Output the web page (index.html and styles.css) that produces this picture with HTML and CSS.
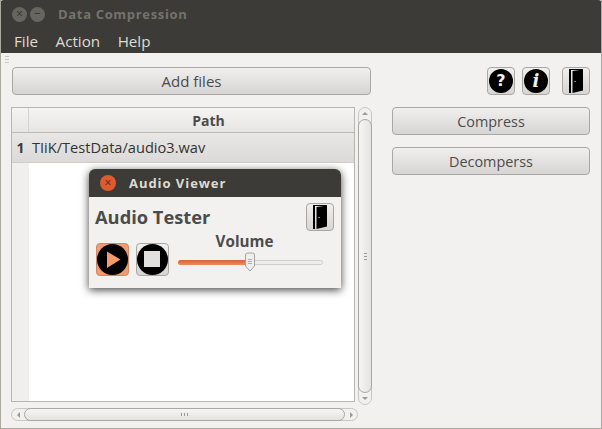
FILE: index.html
```html
<!DOCTYPE html>
<html lang="en">
<head>
    <meta charset="UTF-8">
    <title>Data Compression</title>
    <link rel="stylesheet" href="styles.css">
</head>
<body>
    <div class="window">
        <div class="titlebar">
            <span class="wm-btn">&times;</span>
            <span class="wm-btn">&minus;</span>
            <span class="title">Data Compression</span>
        </div>
        <div class="menubar">
            <span>File</span>
            <span>Action</span>
            <span>Help</span>
        </div>

        <div class="content">
            <div class="grip"></div>
            <!-- Left column: add button and file table -->
            <div class="left">
                <button class="btn add-btn">Add files</button>
                <div class="table-row">
                    <div class="table">
                        <div class="thead">
                            <div class="corner"></div>
                            <div class="th">Path</div>
                        </div>
                        <div class="tr">
                            <div class="row-num">1</div>
                            <div class="td">TIiK/TestData/audio3.wav</div>
                        </div>
                        <div class="tbody-rest">
                            <div class="row-gutter"></div>
                        </div>
                    </div>
                    <div class="vscroll">
                        <div class="arrow-box"><span class="arrow-up"></span></div>
                        <div class="vthumb"><span class="vgrip"></span></div>
                        <div class="arrow-box"><span class="arrow-down"></span></div>
                    </div>
                </div>
                <div class="hscroll">
                    <div class="harrow"><span class="arrow-left"></span></div>
                    <div class="hthumb"><span class="hgrip"></span></div>
                    <div class="harrow"><span class="arrow-right"></span></div>
                </div>
            </div>

            <!-- Right column: icon tools and actions -->
            <div class="right">
                <div class="tools">
                    <button class="btn icon-btn"><span class="disc">?</span></button>
                    <button class="btn icon-btn"><span class="disc disc-info">i</span></button>
                    <button class="btn icon-btn door-btn">
                        <svg width="20" height="26" viewBox="0 0 20 26">
                            <path d="M3 1h14v1H5v23H3z" fill="#000"/>
                            <path d="M6.500 3L17 1.500V22.500L6.500 25z" fill="#000"/>
                            <rect x="8.500" y="13" width="1" height="1" fill="#fff"/>
                        </svg>
                    </button>
                </div>
                <button class="btn action-btn">Compress</button>
                <button class="btn action-btn">Decomperss</button>
            </div>
        </div>

        <!-- Floating audio viewer dialog -->
        <div class="dialog">
            <div class="dialog-bar">
                <span class="dialog-close">&times;</span>
                <span class="dialog-title">Audio Viewer</span>
            </div>
            <div class="dialog-body">
                <div class="dialog-top">
                    <span class="dialog-heading">Audio Tester</span>
                    <button class="btn icon-btn door-btn">
                        <svg width="20" height="26" viewBox="0 0 20 26">
                            <path d="M3 1h14v1H5v23H3z" fill="#000"/>
                            <path d="M6.500 3L17 1.500V22.500L6.500 25z" fill="#000"/>
                            <rect x="8.500" y="13" width="1" height="1" fill="#fff"/>
                        </svg>
                    </button>
                </div>
                <div class="dialog-controls">
                    <button class="btn media-btn media-on">
                        <svg width="31" height="31" viewBox="0 0 31 31">
                            <circle cx="15.500" cy="15.500" r="15.500" fill="#000"/>
                            <path d="M10 7.500L23.500 15.500L10 24z" fill="#f49a6c"/>
                        </svg>
                    </button>
                    <button class="btn media-btn">
                        <svg width="31" height="31" viewBox="0 0 31 31">
                            <circle cx="15.500" cy="15.500" r="15.500" fill="#000"/>
                            <rect x="7" y="7" width="16" height="16" fill="#e2e1e0"/>
                        </svg>
                    </button>
                    <div class="volume">
                        <div class="volume-label">Volume</div>
                        <div class="slider">
                            <div class="slider-fill"></div>
                            <svg class="slider-thumb" width="12" height="20" viewBox="0 0 12 20">
                                <path d="M1.500 3a2 2 0 0 1 2-2h5a2 2 0 0 1 2 2v11l-4.500 5l-4.500-5z" fill="#f0efee" stroke="#a5a39e"/>
                                <path d="M4 7.500h4M4 9.500h4M4 11.500h4" stroke="#b0aeaa"/>
                            </svg>
                        </div>
                    </div>
                </div>
            </div>
        </div>
    </div>
</body>
</html>
```

FILE: styles.css
```css
* {
    box-sizing: border-box;
}
body {
    margin: 0;
    font-family: "Open Sans", sans-serif;
    font-size: 14.6px;
    color: #3c3c3c;
    background-color: #f2f1f0;
}
.window {
    position: relative;
    width: 602px;
    height: 429px;
    overflow: hidden;
    display: flex;
    flex-direction: column;
    border-left: 1px solid #aaa89f;
    border-right: 1px solid #aaa89f;
    border-bottom: 1px solid #aaa89f;
}
.titlebar {
    height: 27px;
    margin: 0 -1px;
    display: flex;
    align-items: center;
    padding: 2px 0 0 12px;
    border-radius: 4px 4px 0 0;
    background-color: #3c3b37;
}
.wm-btn {
    width: 15px;
    height: 15px;
    margin-right: 3px;
    border-radius: 50%;
    background-color: #66655f;
    color: #33322e;
    font-size: 12px;
    line-height: 14px;
    text-align: center;
}
.title {
    margin: -2px 0 0 10px;
    font-weight: 700;
    font-size: 13px;
    letter-spacing: 0.67px;
    color: #75736b;
}
.menubar {
    height: 26px;
    margin: 0 -1px;
    display: flex;
    gap: 17.500px;
    padding: 0 0 0 14px;
    background-color: #3c3b37;
    color: #dfdbd2;
    font-size: 15.2px;
    line-height: 28px;
}
.content {
    position: relative;
    flex: 1;
    display: flex;
    padding: 14px 11px 0 10px;
}
.grip {
    position: absolute;
    left: 4px;
    top: 3px;
    width: 4px;
    height: 8px;
    background: repeating-linear-gradient(#c9c7c3 0 1px, transparent 1px 3px);
}
.btn {
    padding: 0;
    border: 1px solid #a9a7a2;
    border-radius: 4px;
    background: linear-gradient(#f0efee, #d6d5d3);
    color: #4c4c4c;
    font-family: "Open Sans", sans-serif;
    font-size: 14.4px;
}
.left {
    width: 361px;
    display: flex;
    flex-direction: column;
}
.add-btn {
    height: 28px;
    margin-left: 1px;
    width: 359px;
    font-size: 15px;
}
.table-row {
    display: flex;
    gap: 3px;
    margin-top: 12px;
}
.table {
    width: 344px;
    height: 295px;
    display: flex;
    flex-direction: column;
    border: 1px solid #b8b6b1;
    background-color: #fff;
}
.thead {
    height: 25px;
    display: flex;
    background: linear-gradient(#f5f4f3, #e6e5e3);
    border-bottom: 1px solid #bdbbb6;
}
.corner {
    width: 17px;
    border-right: 1px solid #d5d3cf;
}
.th {
    flex: 1;
    padding-left: 34px;
    text-align: center;
    font-size: 14px;
    font-weight: 700;
    line-height: 25px;
    color: #4c4c4c;
}
.tr {
    height: 30px;
    display: flex;
    background: linear-gradient(#e8e7e5, #dbdad8);
    border-bottom: 1px solid #d0cecb;
}
.row-num {
    width: 17px;
    text-align: center;
    font-size: 14px;
    font-weight: 700;
    line-height: 30px;
}
.td {
    flex: 1;
    padding-left: 3px;
    line-height: 28px;
    color: #333;
}
.tbody-rest {
    flex: 1;
}
.row-gutter {
    width: 17px;
    height: 100%;
    background-color: #f0efee;
}
.vscroll {
    width: 14px;
    height: 298px;
    display: flex;
    flex-direction: column;
    border: 1px solid #c8c6c2;
    border-radius: 7px;
}
.arrow-box {
    height: 11px;
    display: flex;
    align-items: center;
    justify-content: center;
}
.vthumb {
    flex: 1;
    margin: 0 -1px;
    display: flex;
    align-items: center;
    justify-content: center;
    border: 1px solid #a9a7a2;
    border-radius: 7px;
    background: linear-gradient(90deg, #f6f5f4, #e4e3e1);
}
.vgrip {
    width: 3px;
    height: 7px;
    background: repeating-linear-gradient(#9c9a95 0 1px, transparent 1px 3px);
}
.arrow-up, .arrow-down, .arrow-left, .arrow-right {
    width: 0;
    height: 0;
    border: 3px solid transparent;
}
.arrow-up {
    border-bottom-color: #9c9a95;
    border-top-width: 0;
}
.arrow-down {
    border-top-color: #9c9a95;
    border-bottom-width: 0;
}
.arrow-left {
    border-right-color: #9c9a95;
    border-left-width: 0;
}
.arrow-right {
    border-left-color: #9c9a95;
    border-right-width: 0;
}
.hscroll {
    width: 347px;
    height: 13px;
    margin-top: 3px;
    display: flex;
    border: 1px solid #c8c6c2;
    border-radius: 7px;
}
.harrow {
    width: 12px;
    display: flex;
    align-items: center;
    justify-content: center;
}
.hthumb {
    flex: 1;
    margin: -1px 0;
    display: flex;
    align-items: center;
    justify-content: center;
    border: 1px solid #a9a7a2;
    border-radius: 7px;
    background: linear-gradient(#f6f5f4, #e4e3e1);
}
.hgrip {
    width: 7px;
    height: 3px;
    background: repeating-linear-gradient(90deg, #9c9a95 0 1px, transparent 1px 3px);
}
.right {
    width: 198px;
    margin-left: 20px;
    display: flex;
    flex-direction: column;
    gap: 12px;
}
.tools {
    display: flex;
    justify-content: flex-end;
    gap: 7px;
}
.icon-btn {
    width: 28px;
    height: 28px;
    display: flex;
    align-items: center;
    justify-content: center;
}
.door-btn {
    margin-left: 5px;
}
.disc {
    width: 24px;
    height: 24px;
    border-radius: 50%;
    background-color: #000;
    color: #f2f1f0;
    font-family: "DejaVu Sans", sans-serif;
    font-weight: 700;
    font-size: 16px;
    line-height: 24px;
    text-align: center;
}
.disc-info {
    font-family: "DejaVu Serif", serif;
    font-style: italic;
    font-size: 18px;
}
.action-btn {
    height: 28px;
}
.dialog {
    position: absolute;
    left: 88px;
    top: 169px;
    width: 252px;
    height: 119px;
    border-radius: 6px 6px 0 0;
    background-color: #f2f1f0;
    box-shadow: 0 2px 8px rgba(0, 0, 0, 0.75);
}
.dialog-bar {
    height: 28px;
    display: flex;
    align-items: center;
    padding-left: 11px;
    border-radius: 6px 6px 0 0;
    background-color: #3c3b37;
}
.dialog-close {
    width: 16px;
    height: 16px;
    border-radius: 50%;
    background-color: #df5a2e;
    color: #53291a;
    font-size: 12px;
    line-height: 15px;
    text-align: center;
}
.dialog-title {
    margin-left: 13px;
    font-weight: 700;
    font-size: 13px;
    letter-spacing: 0.95px;
    color: #dfdbd2;
}
.dialog-body {
    padding: 6px 7px 0 6px;
}
.dialog-top {
    display: flex;
    justify-content: space-between;
    align-items: center;
}
.dialog-heading {
    margin-top: -2px;
    font-weight: 700;
    font-size: 18.3px;
    color: #4c4c4c;
}
.dialog-controls {
    display: flex;
    align-items: flex-start;
    gap: 7px;
    margin-top: 12px;
    padding-left: 1px;
}
.media-btn {
    width: 33px;
    height: 33px;
    display: flex;
    align-items: center;
    justify-content: center;
}
.media-on {
    background: #f49a6c;
    border-color: #c98a6a;
}
.volume {
    width: 145px;
    margin: -11px 0 0 2px;
}
.volume-label {
    padding-right: 12px;
    text-align: center;
    font-size: 15.2px;
    font-weight: 700;
    line-height: 18px;
    color: #4c4c4c;
}
.slider {
    position: relative;
    height: 5px;
    margin-top: 10px;
    border: 1px solid #d0cecb;
    border-radius: 3px;
    background-color: #eeedeb;
}
.slider-fill {
    width: 72px;
    height: 5px;
    margin: -1px 0 0 -1px;
    border-radius: 3px;
    background: linear-gradient(#d9623a, #ee8a5c);
}
.slider-thumb {
    position: absolute;
    left: 65px;
    top: -9px;
}
```
